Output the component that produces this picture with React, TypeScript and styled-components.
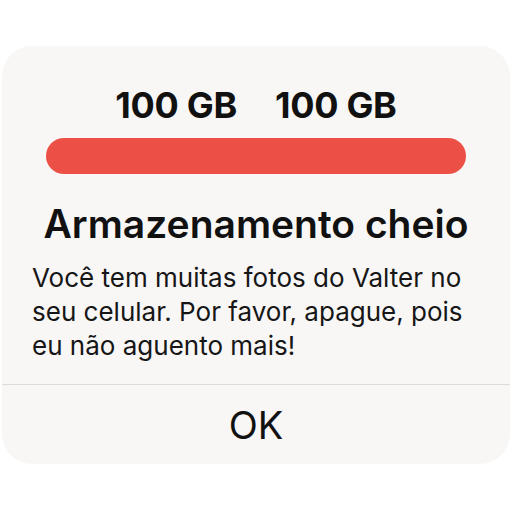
import React from 'react';
import styled, { createGlobalStyle } from 'styled-components';

const GlobalStyle = createGlobalStyle`
  html, body {
    margin: 0;
    padding: 0;
    background: #fff;
  }
  body {
    font-family: Inter, 'Noto Sans', sans-serif;
    color: #111;
  }
`;

const Page = styled.div`
  width: 512px;
  height: 512px;
  padding-top: 46px;
  box-sizing: border-box;
  display: flex;
  justify-content: center;
`;

const Card = styled.div`
  width: 508px;
  height: 418px;
  background: #f8f7f6;
  border-radius: 30px;
  display: flex;
  flex-direction: column;
  overflow: hidden;
`;

const Body = styled.div`
  flex: 1;
  display: flex;
  flex-direction: column;
  padding: 39px 30px 0;
`;

const Sizes = styled.div`
  display: flex;
  justify-content: center;
  gap: 38px;
  font-size: 36px;
  font-weight: 700;
  line-height: 40px;
  letter-spacing: -0.3px;
`;

const Bar = styled.div`
  margin: 13px 14px 0;
  height: 36px;
  border-radius: 18px;
  background: #ec4f45;
`;

const Title = styled.h1`
  margin: 28px 0 0;
  font-size: 39px;
  font-weight: 600;
  line-height: 44px;
  text-align: center;
  white-space: nowrap;
`;

const Message = styled.p`
  margin: 15px 10px 0 0;
  font-size: 26px;
  font-weight: 400;
  line-height: 34px;
  color: #161616;
`;

const Action = styled.button`
  height: 80px;
  border: none;
  border-top: 1px solid #dcdcdc;
  background: transparent;
  font-family: inherit;
  font-size: 38px;
  font-weight: 400;
  color: #111;
`;

export default function App() {
  return (
    <>
      <GlobalStyle />
      <Page>
        <Card>
          <Body>
            <Sizes>
              <span>100 GB</span>
              <span>100 GB</span>
            </Sizes>
            <Bar />
            <Title>Armazenamento cheio</Title>
            <Message>
              Você tem muitas fotos do Valter no seu celular. Por favor, apague, pois eu não aguento mais!
            </Message>
          </Body>
          <Action>OK</Action>
        </Card>
      </Page>
    </>
  );
}
